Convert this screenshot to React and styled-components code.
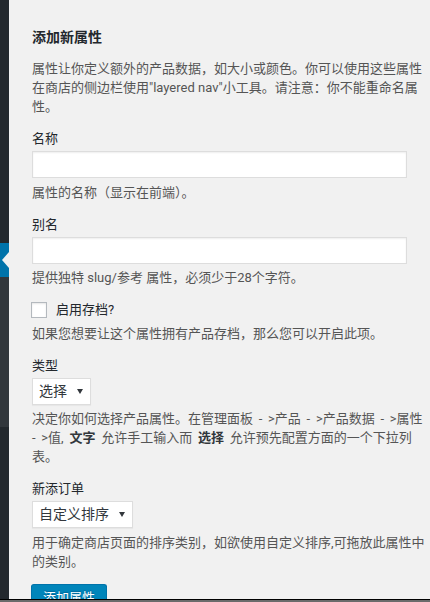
import React from 'react';
import styled, { createGlobalStyle } from 'styled-components';

const GlobalStyle = createGlobalStyle`
  html, body {
    margin: 0;
    padding: 0;
    background: #f1f1f1;
    overflow: hidden;
  }
  body {
    font-family: Roboto, "Noto Sans CJK SC", sans-serif;
    font-size: 13px;
    line-height: 19px;
    color: #444;
  }
`;

const fields = [
  {
    label: '名称',
    help: '属性的名称（显示在前端）。',
  },
  {
    label: '别名',
    help: '提供独特 slug/参考 属性，必须少于28个字符。',
  },
];

const App = () => {
  return (
    <>
      <GlobalStyle />
      <Page>
        <Sidebar>
          <MenuBlock tone="#23282d" height={243} />
          <MenuBlock tone="#0073aa" height={34}>
            <CurrentArrow />
          </MenuBlock>
          <MenuBlock tone="#32373c" height={150} />
          <MenuBlock tone="#23282d" grow />
        </Sidebar>

        <Main>
          <Heading>添加新属性</Heading>
          <Intro>
            属性让你定义额外的产品数据，如大小或颜色。你可以使用这些属性在商店的侧边栏使用"layered nav"小工具。请注意：你不能重命名属性。
          </Intro>

          {fields.map((f) => (
            <Field key={f.label}>
              <Label>{f.label}</Label>
              <TextInput type="text" />
              <Help>{f.help}</Help>
            </Field>
          ))}

          <Field>
            <CheckRow>
              <CheckBox />
              <CheckLabel>启用存档?</CheckLabel>
            </CheckRow>
            <Help>如果您想要让这个属性拥有产品存档，那么您可以开启此项。</Help>
          </Field>

          <Field>
            <Label>类型</Label>
            <SelectBox>
              <span>选择</span>
              <Caret />
            </SelectBox>
            <Help spacing="2.5px">
              决定你如何选择产品属性。在管理面板 - &gt;产品 - &gt;产品数据 - &gt;属性 <NoWrap>- &gt;值,</NoWrap> <strong>文字</strong> 允许手工输入而 <strong>选择</strong> 允许预先配置方面的一个下拉列表。
            </Help>
          </Field>

          <Field>
            <Label>新添订单</Label>
            <SelectBox>
              <span>自定义排序</span>
              <Caret />
            </SelectBox>
            <Help>用于确定商店页面的排序类别，如欲使用自定义排序,可拖放此属性中的类别。</Help>
          </Field>

          <PrimaryButton>添加属性</PrimaryButton>
        </Main>
      </Page>
      <BottomEdge />
    </>
  );
};

const Caret = () => (
  <svg width="6" height="5" viewBox="0 0 6 5">
    <path d="M0 0 L6 0 L3 5 Z" fill="#32373c" />
  </svg>
);

export default App;

const Page = styled.div`
  display: flex;
  height: 602px;
`;

const Sidebar = styled.div`
  width: 9px;
  flex: 0 0 9px;
  display: flex;
  flex-direction: column;
`;

const MenuBlock = styled.div`
  background: ${({ tone }) => tone};
  height: ${({ height }) => (height ? `${height}px` : 'auto')};
  flex: ${({ grow }) => (grow ? '1' : '0 0 auto')};
  display: flex;
  align-items: center;
  justify-content: flex-end;
`;

const CurrentArrow = styled.div`
  width: 0;
  height: 0;
  border-top: 8px solid transparent;
  border-bottom: 8px solid transparent;
  border-right: 7px solid #f1f1f1;
  margin-top: -1px;
`;

const Main = styled.div`
  width: 395px;
  padding: 28px 0 0 23px;
`;

const Heading = styled.h2`
  margin: 0;
  font-size: 14px;
  line-height: 19px;
  font-weight: 700;
  color: #23282d;
`;

const Intro = styled.p`
  margin: 12px 0 13px;
  color: #555;
`;

const Field = styled.div`
  margin-bottom: 13px;
`;

const Label = styled.div`
  color: #23282d;
  margin-bottom: 3px;
`;

const TextInput = styled.input`
  display: block;
  box-sizing: border-box;
  width: 375px;
  height: 27px;
  margin: 0;
  padding: 3px 5px;
  border: 1px solid #ddd;
  background: #fff;
  box-shadow: inset 0 1px 2px rgba(0, 0, 0, 0.07);
  outline: none;
  font: inherit;
`;

const Help = styled.p`
  margin: 4.5px 0 0;
  color: #555;
  word-spacing: ${({ spacing }) => spacing || 'normal'};

  strong {
    color: #32373c;
    font-weight: 700;
  }
`;

const NoWrap = styled.span`
  white-space: nowrap;
`;

const CheckRow = styled.label`
  display: flex;
  align-items: center;
  gap: 9px;
  margin-left: -1px;
`;

const CheckBox = styled.span`
  box-sizing: border-box;
  width: 16px;
  height: 16px;
  border: 1px solid #b4b9be;
  background: #fff;
  box-shadow: inset 0 1px 2px rgba(0, 0, 0, 0.1);
`;

const CheckLabel = styled.span`
  color: #23282d;
`;

const SelectBox = styled.div`
  box-sizing: border-box;
  display: inline-flex;
  align-items: center;
  gap: 10px;
  height: 27px;
  padding: 0 7px 0 6px;
  border: 1px solid #ddd;
  background: #fff;
  box-shadow: 0 1px 1px rgba(0, 0, 0, 0.04);
  font-size: 14px;
  color: #32373c;
`;

const PrimaryButton = styled.button`
  display: block;
  box-sizing: border-box;
  height: 28px;
  margin: 0 0 0 -1px;
  padding: 0 11px 2px;
  border: 1px solid #0073aa;
  border-bottom-color: #006799;
  border-radius: 3px;
  background: #0085ba;
  box-shadow: 0 1px 0 #006799;
  color: #fff;
  font: inherit;
  font-size: 13px;
  line-height: 26px;
  text-shadow: 0 -1px 1px #006799;
`;

const BottomEdge = styled.div`
  position: fixed;
  left: 0;
  right: 0;
  bottom: 0;
  height: 2px;
  border-top: 1px solid #000;
  background: #6b6b6b;
`;
